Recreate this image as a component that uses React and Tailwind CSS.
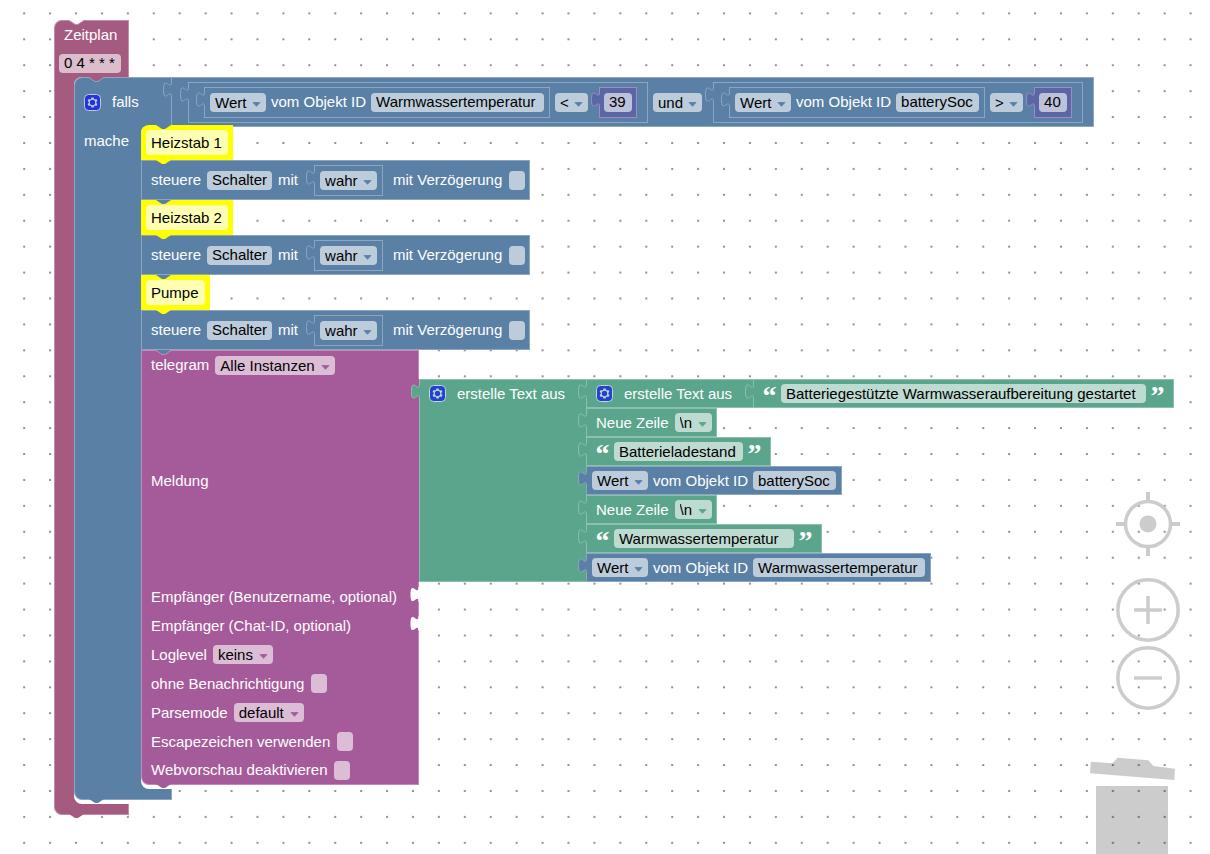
import clsx from "clsx";

const BLUE = "#5b80a5";
const GREEN = "#5ba58c";
const PURPLE = "#a55b99";
const ROSE = "#a55b80";
const VIOLET = "#5b67a5";

const TONES = {
  blue: { fill: BLUE, line: "#8ca6c0", block: "bg-[#5b80a5] border-[#8ca6c0]", chip: "bg-[#bdccdb]" },
  green: { fill: GREEN, line: "#8cc0ae", block: "bg-[#5ba58c] border-[#8cc0ae]", chip: "bg-[#bddbd1]" },
  purple: { fill: PURPLE, line: "#c08cb7", block: "bg-[#a55b99] border-[#c08cb7]", chip: "bg-[#dbbdd6]" },
  rose: { fill: ROSE, line: "#c08ca6", block: "bg-[#a55b80] border-[#c08ca6]", chip: "bg-[#dbbdcc]" },
  violet: { fill: VIOLET, line: "#9c8cc8", block: "bg-[#5b67a5] border-[#9c8cc8]", chip: "bg-[#bdc2db]" },
};

// Puzzle tab on the left edge of a value block
function Tab({ tone }) {
  const { fill, line } = TONES[tone];
  return (
    <svg width="9" height="22" className="absolute -left-[9px] -top-px">
      <path d="M9 5H8.5c0 10-8-8-8 7.5s8-2.5 8 7.5H9z" fill={fill} />
      <path d="M8.5 5c0 10-8-8-8 7.5s8-2.5 8 7.5" fill="none" stroke={line} />
    </svg>
  );
}

// Empty socket for a value block, cut into the right edge
function Socket() {
  return (
    <svg width="9" height="22" className="absolute -right-px top-0">
      <path d="M9 5H8.5c0 10-8-8-8 7.5s8-2.5 8 7.5H9z" fill="#fff" />
    </svg>
  );
}

// Notch in the top edge, filled with the colour lying above it
function Notch({ above, line }) {
  return (
    <svg width="15" height="5" className="absolute left-[14px] -top-px">
      <path d="M0 0l6 4h3l6-4z" fill={above} />
      <path d="M0 .5l6 4h3l6-4" fill="none" stroke={line} />
    </svg>
  );
}

// Bump under the bottom edge
function Bump({ fill }) {
  return (
    <svg width="15" height="5" className="absolute left-[14px] -bottom-[5px] z-10">
      <path d="M0 0l6 4h3l6-4z" fill={fill} />
    </svg>
  );
}

function InnerCorners({ fill }) {
  return (
    <>
      <svg width="8" height="8" className="absolute left-0 top-0">
        <path d="M0 0H8A8 8 0 0 0 0 8z" fill={fill} />
      </svg>
      <svg width="8" height="8" className="absolute bottom-0 left-0">
        <path d="M0 0A8 8 0 0 0 8 8H0z" fill={fill} />
      </svg>
    </>
  );
}

function Gear() {
  return (
    <button type="button" aria-label="Block anpassen" className="h-[17px] w-[17px] shrink-0">
      <svg width="17" height="17" viewBox="-0.5 -0.5 17 17" opacity="0.6" className="block">
        <rect width="16" height="16" rx="4" fill="#00f" stroke="#fff" />
        <path
          fill="#fff"
          d="m4.203,7.296 0,1.368 -0.92,0.677 -0.11,0.41 0.9,1.559 0.41,0.11 1.043,-0.457 1.187,0.683 0.127,1.134 0.3,0.3 1.8,0 0.3,-0.299 0.127,-1.138 1.185,-0.682 1.046,0.458 0.409,-0.11 0.9,-1.559 -0.11,-0.41 -0.92,-0.677 0,-1.366 0.92,-0.677 0.11,-0.41 -0.9,-1.559 -0.409,-0.109 -1.046,0.458 -1.185,-0.682 -0.127,-1.138 -0.3,-0.299 -1.8,0 -0.3,0.3 -0.126,1.135 -1.187,0.682 -1.043,-0.457 -0.41,0.11 -0.899,1.559 0.108,0.409z"
        />
        <circle cx="8" cy="8" r="2.7" fill="#00f" />
      </svg>
    </button>
  );
}

function TextField({ tone, value, label, className }) {
  return (
    <input
      type="text"
      aria-label={label}
      defaultValue={value}
      className={clsx("h-[19px] shrink-0 rounded-[4px] px-[5px] text-black outline-none", TONES[tone].chip, className)}
    />
  );
}

function Dropdown({ tone, value, label, className }) {
  return (
    <span className={clsx("relative flex h-[19px] shrink-0", className)}>
      <select
        aria-label={label}
        defaultValue={value}
        className={clsx(
          "h-full w-full appearance-none rounded-[4px] pl-[5px] leading-[19px] text-black outline-none",
          TONES[tone].chip
        )}
      >
        <option>{value}</option>
      </select>
      <svg width="9" height="5" className="pointer-events-none absolute right-[5px] top-[9px]">
        <path d="M1 .5h7L4.500 4.300z" fill={TONES[tone].fill} stroke={TONES[tone].fill} strokeWidth=".8" strokeLinejoin="round" />
      </svg>
    </span>
  );
}

function Checkbox({ tone, label }) {
  return (
    <label className="flex items-center gap-[7px]">
      {label}
      <input type="checkbox" className={clsx("h-[19px] w-[16px] appearance-none rounded-[4px]", TONES[tone].chip)} />
    </label>
  );
}

function ObjectValue({ id, fieldWidth, className }) {
  return (
    <div className={clsx("relative flex shrink-0 items-center gap-[5px] border px-[5px]", TONES.blue.block, className)}>
      <Tab tone="blue" />
      <Dropdown tone="blue" value="Wert" label="Attribut" className="w-[56px]" />
      <span>vom Objekt ID</span>
      <TextField tone="blue" value={id} label="Objekt ID" className={fieldWidth} />
    </div>
  );
}

function NumberValue({ value }) {
  return (
    <div className={clsx("relative ml-[11px] flex h-[31px] shrink-0 items-center border px-[4px]", TONES.violet.block)}>
      <Tab tone="violet" />
      <TextField tone="violet" value={value} label="Zahl" className="w-[28px]" />
    </div>
  );
}

function Compare({ id, fieldWidth, operator, number }) {
  return (
    <div className={clsx("relative flex h-[41px] shrink-0 items-center border pl-[15px] pr-[10px]", TONES.blue.block)}>
      <Tab tone="blue" />
      <ObjectValue id={id} fieldWidth={fieldWidth} className="h-[31px]" />
      <Dropdown tone="blue" value={operator} label="Vergleich" className="ml-[5px] w-[33px]" />
      <NumberValue value={number} />
    </div>
  );
}

function Comment({ text, width, first }) {
  return (
    <div className={clsx("relative h-[35px] w-max bg-[#ffff00] p-[5px]", first && "rounded-tl-lg")}>
      <svg width="15" height="5" className="absolute left-[15px] top-0">
        <path d="M0 0l6 4h3l6-4z" fill={BLUE} />
      </svg>
      <input
        type="text"
        aria-label="Kommentar"
        defaultValue={text}
        className={clsx("relative block h-[25px] rounded-[4px] bg-[#ffffb3] px-[5px] text-black outline-none", width)}
      />
      <svg width="15" height="5" className="absolute -bottom-[5px] left-[15px] z-10">
        <path d="M0 0l6 4h3l6-4z" fill="#ffff00" />
      </svg>
    </div>
  );
}

function Control() {
  return (
    <div className={clsx("relative flex h-[40px] w-max items-center gap-[6px] border pl-[9px] pr-[4px]", TONES.blue.block)}>
      <span>steuere</span>
      <TextField tone="blue" value="Schalter" label="Objekt" className="w-[65px]" />
      <span>mit</span>
      <div className={clsx("relative ml-[10px] mr-[4px] flex h-[31px] items-center border px-[5px]", TONES.blue.block)}>
        <Tab tone="blue" />
        <Dropdown tone="blue" value="wahr" label="Wahrheitswert" className="w-[57px]" />
      </div>
      <Checkbox tone="blue" label="mit Verzögerung" />
    </div>
  );
}

function Quote({ children }) {
  return (
    <span className="flex h-[10px] w-[13px] shrink-0 justify-center font-['Liberation_Serif',serif] text-[28px] font-bold leading-[14px]">
      {children}
    </span>
  );
}

function TextValue({ value, width, className }) {
  return (
    <div className={clsx("relative flex h-[29px] w-max items-center gap-[5px] border px-[9px]", TONES.green.block, className)}>
      <Tab tone="green" />
      <Quote>“</Quote>
      <TextField tone="green" value={value} label="Text" className={width} />
      <Quote>”</Quote>
    </div>
  );
}

function NewLine() {
  return (
    <div className={clsx("relative flex h-[29px] w-max items-center gap-[6px] border pl-[9px] pr-[4px]", TONES.green.block)}>
      <Tab tone="green" />
      <span>Neue Zeile</span>
      <Dropdown tone="green" value="\n" label="Zeilenumbruch" className="w-[37px]" />
    </div>
  );
}

function Message() {
  return (
    <div className="flex">
      <div className={clsx("relative flex w-[167px] shrink-0 items-start border border-r-0", TONES.green.block)}>
        <Tab tone="green" />
        <div className="flex h-[27px] items-center gap-[11px] pl-[9px]">
          <Gear />
          <span>erstelle Text aus</span>
        </div>
      </div>
      <div>
        <div className="flex">
          <div className={clsx("relative flex h-[29px] w-[167px] items-center gap-[11px] border border-r-0 pl-[9px]", TONES.green.block)}>
            <Tab tone="green" />
            <Gear />
            <span>erstelle Text aus</span>
          </div>
          <TextValue value="Batteriegestützte Warmwasseraufbereitung gestartet" width="w-[365px]" />
        </div>
        <NewLine />
        <TextValue value="Batterieladestand" width="w-[129px]" />
        <ObjectValue id="batterySoc" fieldWidth="w-[83px]" className="h-[29px] w-max" />
        <NewLine />
        <TextValue value="Warmwassertemperatur " width="w-[180px]" />
        <ObjectValue id="Warmwassertemperatur" fieldWidth="w-[172px]" className="h-[29px] w-max" />
      </div>
    </div>
  );
}

function TelegramRow({ children }) {
  return (
    <div className="relative flex h-[29px] w-[278px] items-center gap-[6px] border-x border-[#c08cb7] bg-[#a55b99] pl-[9px]">
      {children}
    </div>
  );
}

function Telegram() {
  return (
    <div className="relative w-max">
      <div className="relative flex h-[29px] w-[278px] items-center gap-[6px] border-x border-t border-[#c08cb7] bg-[#a55b99] pl-[9px]">
        <Notch above={BLUE} line={TONES.purple.line} />
        <span>telegram</span>
        <Dropdown tone="purple" value="Alle Instanzen" label="Instanz" className="w-[120px]" />
      </div>
      <div className="flex">
        <div className="flex w-[278px] shrink-0 items-center border-l border-[#c08cb7] bg-[#a55b99] pl-[9px]">Meldung</div>
        <Message />
      </div>
      <TelegramRow>
        Empfänger (Benutzername, optional)
        <Socket />
      </TelegramRow>
      <TelegramRow>
        Empfänger (Chat-ID, optional)
        <Socket />
      </TelegramRow>
      <TelegramRow>
        <span>Loglevel</span>
        <Dropdown tone="purple" value="keins" label="Loglevel" className="w-[60px]" />
      </TelegramRow>
      <TelegramRow>
        <Checkbox tone="purple" label="ohne Benachrichtigung" />
      </TelegramRow>
      <TelegramRow>
        <span>Parsemode</span>
        <Dropdown tone="purple" value="default" label="Parsemode" className="w-[70px]" />
      </TelegramRow>
      <TelegramRow>
        <Checkbox tone="purple" label="Escapezeichen verwenden" />
      </TelegramRow>
      <div className="relative flex h-[29px] w-[278px] items-center rounded-bl-lg border border-t-0 border-[#c08cb7] bg-[#a55b99] pl-[9px]">
        <Checkbox tone="purple" label="Webvorschau deaktivieren" />
        <Bump fill={PURPLE} />
      </div>
    </div>
  );
}

function IfBlock() {
  return (
    <div className="relative w-max">
      <div className={clsx("relative flex h-[50px] w-max items-center rounded-tl-lg border pl-[9px]", TONES.blue.block)}>
        <Notch above={ROSE} line={TONES.blue.line} />
        <Gear />
        <span className="ml-[11px] w-[59px]">falls</span>
        <div className="relative flex items-center self-stretch border-l border-[#8ca6c0] pl-[16px] pr-[10px]">
          <Tab tone="blue" />
          <Compare id="Warmwassertemperatur" fieldWidth="w-[173px]" operator="<" number="39" />
          <Dropdown tone="blue" value="und" label="Verknüpfung" className="ml-[5px] mr-[11px] w-[49px]" />
          <Compare id="batterySoc" fieldWidth="w-[83px]" operator=">" number="40" />
        </div>
      </div>
      <div className="flex">
        <div className="relative -mt-px w-[67px] shrink-0 border-l border-[#8ca6c0] bg-[#5b80a5] pl-[9px] pt-[5px]">mache</div>
        <div className="relative -mt-[2px] pb-1">
          <InnerCorners fill={BLUE} />
          <Comment text="Heizstab 1" width="w-[82px]" first />
          <Control />
          <Comment text="Heizstab 2" width="w-[82px]" />
          <Control />
          <Comment text="Pumpe" width="w-[59px]" />
          <Control />
          <Telegram />
        </div>
      </div>
      <div className="relative h-[11px] w-[98px] rounded-bl-lg border border-t-0 border-[#8ca6c0] bg-[#5b80a5]">
        <Bump fill={BLUE} />
      </div>
    </div>
  );
}

function Schedule() {
  return (
    <div className="relative w-max">
      <div className="relative w-[75px] rounded-tl-lg border border-b-0 border-[#c08ca6] bg-[#a55b80] pl-[4px]">
        <Notch above="#fff" line={TONES.rose.line} />
        <div className="flex h-[28px] items-center pl-[5px]">Zeitplan</div>
        <div className="flex h-[28px] items-center">
          <TextField tone="rose" value="0 4 * * *" label="Zeitplan" className="w-[62px]" />
        </div>
      </div>
      <div className="flex">
        <div className="w-[20px] shrink-0 border-l border-[#c08ca6] bg-[#a55b80]" />
        <div className="relative pb-1">
          <InnerCorners fill={ROSE} />
          <IfBlock />
        </div>
      </div>
      <div className="relative h-[11px] w-[75px] rounded-bl-lg border border-t-0 border-[#c08ca6] bg-[#a55b80]">
        <Bump fill={ROSE} />
      </div>
    </div>
  );
}

function ZoomControls() {
  return (
    <div className="absolute bottom-[144px] right-[30px] flex flex-col">
      <button type="button" aria-label="Zentrieren" className="mb-[22px] h-16 w-16">
        <svg width="64" height="64" fill="none" stroke="#ccc" strokeWidth="4">
          <circle cx="32" cy="32" r="22.500" strokeWidth="3.500" />
          <circle cx="32" cy="32" r="8.500" fill="#ccc" stroke="none" />
          <path d="M32 0v8M32 56v8M0 32h8M56 32h8" />
        </svg>
      </button>
      <button type="button" aria-label="Vergrößern" className="mb-1 h-16 w-16">
        <svg width="64" height="64" fill="none" stroke="#ccc" strokeWidth="3.500">
          <circle cx="32" cy="32" r="30.200" />
          <path d="M18 32h28M32 18v28" />
        </svg>
      </button>
      <button type="button" aria-label="Verkleinern" className="h-16 w-16">
        <svg width="64" height="64" fill="none" stroke="#ccc" strokeWidth="3.500">
          <circle cx="32" cy="32" r="30.200" />
          <path d="M18 32h28" />
        </svg>
      </button>
    </div>
  );
}

function Trash() {
  return (
    <svg width="86" height="98" className="absolute bottom-0 right-[34px]" fill="#000" fillOpacity="0.2">
      <path d="M.8 5.700 22.300 7.300 27.700 1.700 58.500 4.300 63.300 10 85 12.700 84.300 24 0 17.300z" />
      <path d="M6 30H78V98H6z" />
    </svg>
  );
}

function App() {
  return (
    <main className="relative h-screen overflow-hidden bg-white font-['Liberation_Sans',Arial,sans-serif] text-[15px] leading-[20px] text-white">
      <svg width="100%" height="100%" className="absolute inset-0">
        <defs>
          <pattern id="grid" x="11.200" y="0.400" width="25.920" height="25.920" patternUnits="userSpaceOnUse">
            <rect x="12" y="12.200" width="2" height="1.600" fill="#777" />
          </pattern>
        </defs>
        <rect width="100%" height="100%" fill="url(#grid)" />
      </svg>
      <div className="relative pl-[54px] pt-5">
        <Schedule />
      </div>
      <ZoomControls />
      <Trash />
    </main>
  );
}

export default App;
